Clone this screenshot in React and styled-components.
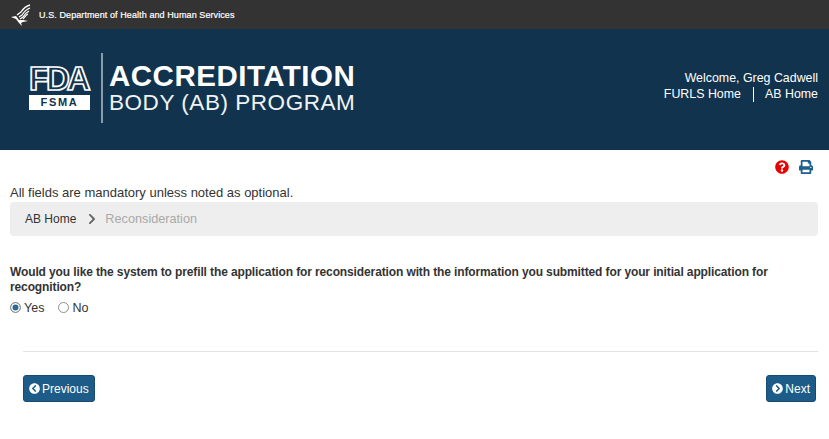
import React from "react";
import styled, { createGlobalStyle } from "styled-components";
import {
  FaChevronCircleLeft,
  FaChevronCircleRight,
  FaChevronRight,
  FaPrint,
  FaQuestionCircle,
} from "react-icons/fa";

const GlobalStyle = createGlobalStyle`
  html, body {
    margin: 0;
    padding: 0;
    background-color: #fff;
    font-family: "Liberation Sans", Arial, sans-serif;
    font-size: 13px;
    color: #333;
  }
`;

const TopBar = styled.div`
  height: 29px;
  background-color: #333;
  display: flex;
  align-items: center;
  padding-left: 10px;
  gap: 8px;
`;

const AgencyName = styled.span`
  color: #fff;
  font-size: 9px;
  letter-spacing: 0.09px;
  -webkit-text-stroke: 0.2px #fff;
`;

const Banner = styled.header`
  height: 121px;
  background-color: #12334d;
  display: flex;
  justify-content: space-between;
  box-sizing: border-box;
  padding: 24px 11px 0 29px;
`;

const Brand = styled.div`
  display: flex;
  height: 70px;
`;

const FdaLogo = styled.div`
  width: 61px;
  padding-top: 12px;
  display: flex;
  flex-direction: column;
`;

const FdaLetters = styled.div`
  height: 28px;
  font-size: 33px;
  line-height: 28px;
  font-weight: 700;
  letter-spacing: -3.1px;
  color: transparent;
  -webkit-text-stroke: 1.7px #fff;
  white-space: nowrap;
`;

const FsmaPlate = styled.div`
  height: 15px;
  margin-top: 2px;
  background-color: #fff;
  color: #12334d;
  font-size: 11px;
  line-height: 15px;
  font-weight: 700;
  letter-spacing: 1.7px;
  text-align: center;
`;

const BrandRule = styled.div`
  width: 2px;
  background-color: #8b9cab;
  margin: 0 6px 0 11px;
`;

const BrandTitle = styled.div`
  padding-top: 8px;
  color: #fff;
  white-space: nowrap;
`;

const TitleMain = styled.div`
  font-size: 29.5px;
  line-height: 30px;
  font-weight: 700;
  letter-spacing: 0.5px;
`;

const TitleSub = styled.div`
  font-size: 22.5px;
  line-height: 23px;
  letter-spacing: 0.54px;
  color: #f0f3f5;
`;

const UserBox = styled.div`
  padding-top: 17px;
  color: #fff;
  text-align: right;
  line-height: 16px;
  font-size: 12.4px;
`;

const UserLinks = styled.div`
  display: flex;
  justify-content: flex-end;
  align-items: center;
`;

const UserLink = styled.a`
  color: #fff;
`;

const LinkRule = styled.span`
  width: 1px;
  height: 15px;
  background-color: #fff;
  margin: 0 11px 0 12px;
`;

const Main = styled.main`
  padding: 0 11px 0 10px;
`;

const Tools = styled.div`
  height: 34px;
  display: flex;
  justify-content: flex-end;
  align-items: center;
  gap: 10px;
  padding-right: 5px;
`;

const ToolIcon = styled.span`
  display: flex;
  font-size: ${(p) => p.$size}px;
  color: ${(p) => p.$color};
`;

const Notice = styled.div`
  line-height: 18px;
  font-size: 13px;
`;

const Breadcrumb = styled.nav`
  height: 34px;
  background-color: #eee;
  border-radius: 4px;
  display: flex;
  align-items: center;
  padding-left: 15px;
  font-size: 12px;
  padding-bottom: 1px;
  box-sizing: border-box;
`;

const CrumbLink = styled.a`
  color: #333;
`;

const CrumbSep = styled.span`
  display: flex;
  margin: 0 7px 0 10px;
  font-size: 12px;
  color: #666;
  stroke: #666;
  stroke-width: 70px;
`;

const CrumbCurrent = styled.span`
  color: #a9a9a9;
  font-size: 12.7px;
`;

const Question = styled.p`
  margin: 29px 0 0;
  font-size: 12px;
  line-height: 15px;
  font-weight: 700;
  letter-spacing: -0.12px;
`;

const RadioRow = styled.div`
  display: flex;
  gap: 14px;
  margin-top: 5px;
  height: 15px;
  align-items: center;
`;

const RadioLabel = styled.label`
  display: flex;
  align-items: center;
  gap: 3px;
  font-size: 12.5px;
`;

const Radio = styled.input`
  appearance: none;
  margin: 0;
  width: 11px;
  height: 11px;
  border: 1px solid #8f8f8f;
  border-radius: 50%;
  background-color: #fff;
  box-sizing: border-box;
  &:checked {
    background-color: #2f6795;
    box-shadow: inset 0 0 0 1.5px #fff;
  }
`;

const Footer = styled.div`
  margin: 36px 0 0 13px;
  border-top: 1px solid #e3e3e3;
  padding: 23px 2px 0 0;
  display: flex;
  justify-content: space-between;
`;

const NavButton = styled.button`
  height: 27px;
  box-sizing: border-box;
  padding: 0 5px;
  display: flex;
  align-items: center;
  gap: 2px;
  background-color: #1d5c88;
  border: 1px solid #174a6e;
  border-radius: 3px;
  color: #fff;
  font-family: inherit;
  font-size: 12px;
  & svg {
    font-size: 11px;
  }
`;

function Eagle() {
  return (
    <svg width="21" height="22" viewBox="0 0 21 22" fill="none" stroke="#fff">
      <path d="M20 1 C16 2 13 5 11 8 L7 11" strokeWidth="1.3" />
      <path d="M20 4 C17 5 14 8 12 11 L9 13" strokeWidth="1.3" />
      <path d="M19 7 C17 8 15 10 13 13 L10 15" strokeWidth="1.3" />
      <path d="M18 10 C16 11 15 13 13 15" strokeWidth="1.2" />
      <path d="M1 13 L6 12 L9 16 L13 16 L18 17 L13 18 L11 19 L12 22 L9 19 L6 15 Z" fill="#fff" stroke="none" />
    </svg>
  );
}

function App() {
  return (
    <>
      <GlobalStyle />
      <TopBar>
        <Eagle />
        <AgencyName>U.S. Department of Health and Human Services</AgencyName>
      </TopBar>
      <Banner>
        <Brand>
          <FdaLogo>
            <FdaLetters>FDA</FdaLetters>
            <FsmaPlate>FSMA</FsmaPlate>
          </FdaLogo>
          <BrandRule />
          <BrandTitle>
            <TitleMain>ACCREDITATION</TitleMain>
            <TitleSub>BODY (AB) PROGRAM</TitleSub>
          </BrandTitle>
        </Brand>
        <UserBox>
          <div>Welcome, Greg Cadwell</div>
          <UserLinks>
            <UserLink>FURLS Home</UserLink>
            <LinkRule />
            <UserLink>AB Home</UserLink>
          </UserLinks>
        </UserBox>
      </Banner>
      <Main>
        <Tools>
          <ToolIcon $size={14} $color="#e60000">
            <FaQuestionCircle />
          </ToolIcon>
          <ToolIcon $size={14} $color="#1f5f8b">
            <FaPrint />
          </ToolIcon>
        </Tools>
        <Notice>All fields are mandatory unless noted as optional.</Notice>
        <Breadcrumb>
          <CrumbLink>AB Home</CrumbLink>
          <CrumbSep>
            <FaChevronRight />
          </CrumbSep>
          <CrumbCurrent>Reconsideration</CrumbCurrent>
        </Breadcrumb>
        <Question>
          Would you like the system to prefill the application for reconsideration with the
          information you submitted for your initial application for recognition?
        </Question>
        <RadioRow>
          <RadioLabel>
            <Radio type="radio" name="prefill" defaultChecked />
            Yes
          </RadioLabel>
          <RadioLabel>
            <Radio type="radio" name="prefill" />
            No
          </RadioLabel>
        </RadioRow>
        <Footer>
          <NavButton>
            <FaChevronCircleLeft />
            Previous
          </NavButton>
          <NavButton>
            <FaChevronCircleRight />
            Next
          </NavButton>
        </Footer>
      </Main>
    </>
  );
}

export default App;
